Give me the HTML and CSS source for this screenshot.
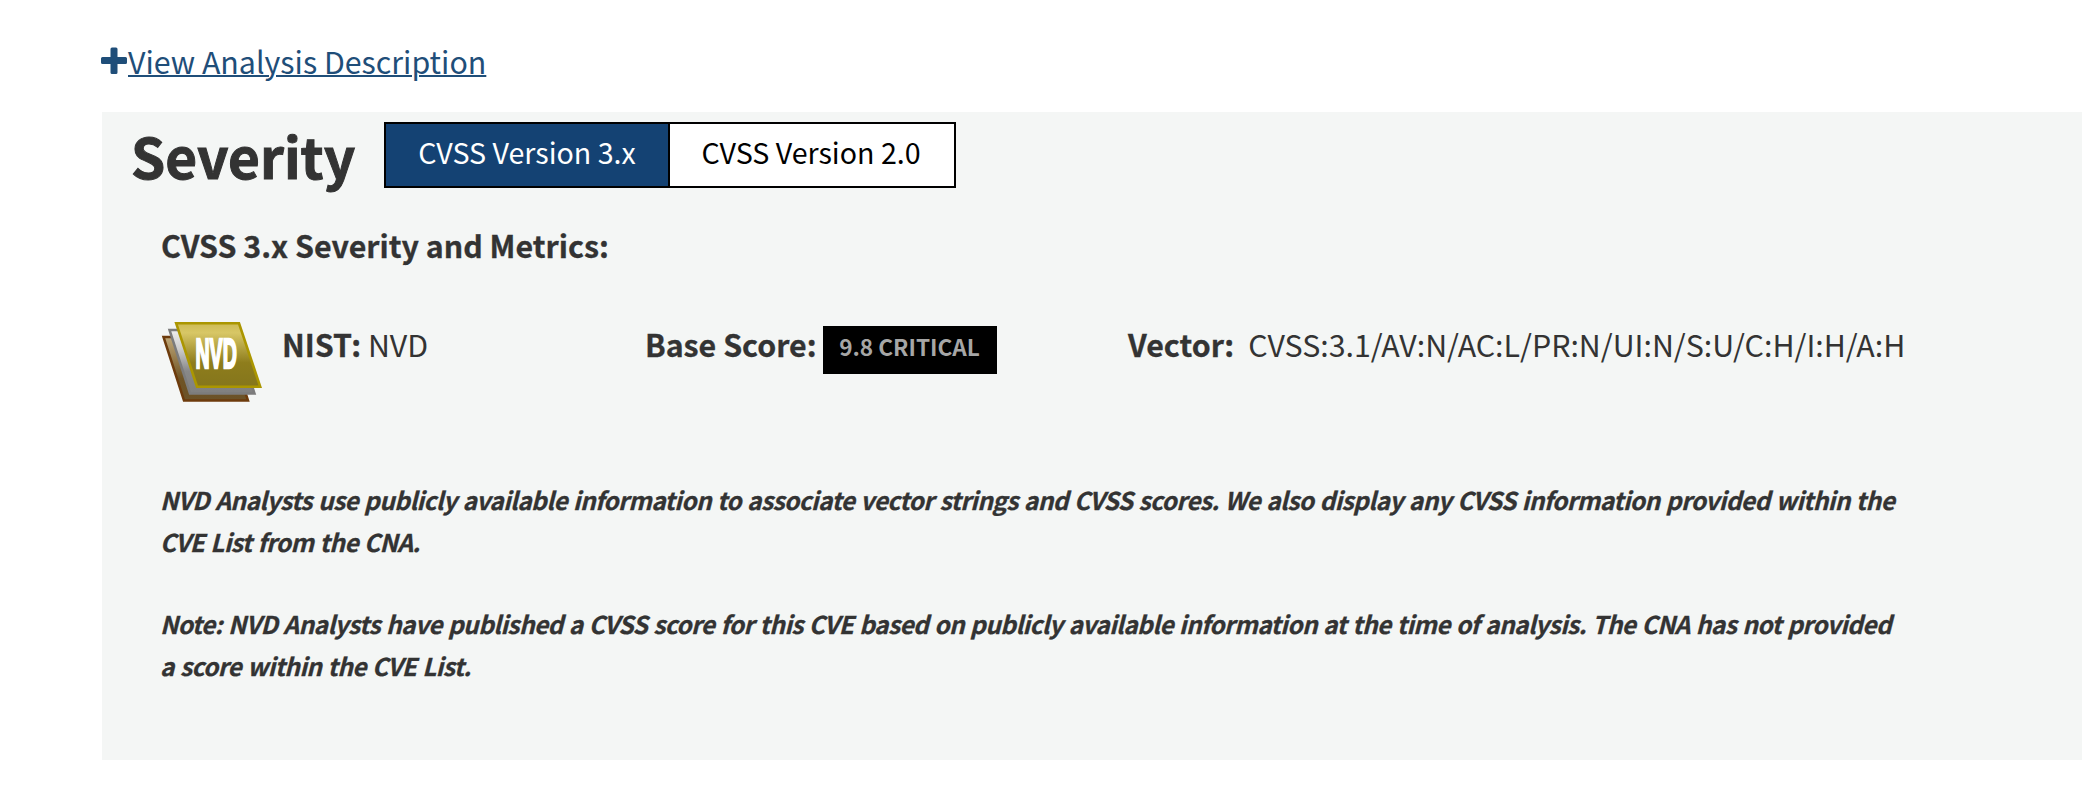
FILE: index.html
```
<!DOCTYPE html>
<html lang="en">
<head>
<meta charset="utf-8">
<title>CVE Detail</title>
<link rel="stylesheet" href="styles.css">
</head>
<body>
<a class="view-link" href="#"><svg class="plus" viewBox="0 0 26 26"><path d="M11 0h4q1.500 0 1.500 1.500V9.500h8q1.500 0 1.500 1.500v4q0 1.500-1.500 1.500h-8v8.500q0 1.500-1.500 1.500h-4q-1.500 0-1.500-1.500V16.500h-8Q0 16.500 0 15v-4q0-1.500 1.500-1.500h8v-8Q9.500 0 11 0z"/></svg><span>View Analysis Description</span></a>
<main class="panel">
  <header class="head">
    <h2>Severity</h2>
    <div class="tabs"><button class="tab active">CVSS Version 3.x</button><button class="tab">CVSS Version 2.0</button></div>
  </header>
  <p class="subtitle">CVSS 3.x Severity and Metrics:</p>
  <div class="row">
    <svg class="logo" viewBox="0 0 102 82">
      <defs>
        <linearGradient id="gold" x2="0" y2="1"><stop offset="0" stop-color="#cdbb55"/><stop offset=".15" stop-color="#d8c766"/><stop offset=".62" stop-color="#8e7d1c"/><stop offset="1" stop-color="#85761c"/></linearGradient>
        <linearGradient id="silver" x2="0" y2="1"><stop offset="0" stop-color="#eee"/><stop offset=".3" stop-color="#ccc"/><stop offset=".65" stop-color="#888"/><stop offset="1" stop-color="#808080"/></linearGradient>
        <linearGradient id="bronze" x2="0" y2="1"><stop offset="0" stop-color="#c0a878"/><stop offset=".65" stop-color="#6f5425"/><stop offset="1" stop-color="#6b5228"/></linearGradient>
      </defs>
      <path d="M2.500 15h64l20.500 63.500H23z" fill="url(#bronze)" stroke="#6d3b0c" stroke-width="2.500"/>
      <path d="M8.500 8h64L93.500 71.500H29z" fill="url(#silver)" stroke="#7c7c7c" stroke-width="2.500"/>
      <path d="M15.200 1.300h62.800l21.200 63.400H36z" fill="url(#gold)" stroke="#ab9600" stroke-width="2.600"/>
      <text transform="translate(34.500 46) scale(.465 1)">NVD</text>
    </svg>
    <div class="nist"><b>NIST:</b> <span>NVD</span></div>
    <div class="score"><b>Base Score:</b><span class="badge">9.8 CRITICAL</span></div>
    <div class="vector"><b>Vector:</b><span>CVSS:3.1/AV:N/AC:L/PR:N/UI:N/S:U/C:H/I:H/A:H</span></div>
  </div>
  <p class="note">NVD Analysts use publicly available information to associate vector strings and CVSS scores. We also display any CVSS information provided within the<br>CVE List from the CNA.</p>
  <p class="note second">Note: NVD Analysts have published a CVSS score for this CVE based on publicly available information at the time of analysis. The CNA has not provided<br>a score within the CVE List.</p>
</main>
</body>
</html>
```
FILE: styles.css
```
* { box-sizing: border-box; }
body { margin: 0; height: 800px; overflow: hidden; background: #fff; color: #333; font-family: "Noto Sans CJK SC", sans-serif; font-size: 30.35px; line-height: 42px; padding: 40px 0 0 101px; }
h2, p { margin: 0; }
b, .subtitle, .note { -webkit-text-stroke: .3px #333; }
.view-link { display: flex; height: 72px; color: #1f4e79; white-space: nowrap; text-decoration: none; }
.view-link span { margin-left: 1px; text-decoration: underline; text-decoration-thickness: 2px; }
.plus { width: 26px; height: 27px; margin-top: 7px; fill: #1f4e79; }
.panel { height: 648px; margin-left: 1px; background: #f4f6f5; padding: 10px 0 0 29px; }
.head { display: flex; height: 102px; }
h2 { width: 253px; flex: none; font-size: 54.9px; line-height: 67px; -webkit-text-stroke: 1px #333; }
.tabs { display: flex; width: 572px; height: 66px; border: 2px solid #000; }
.tab { flex: 1; border: 0; background: #fff; font: inherit; font-size: 28.6px; color: #000; white-space: nowrap; padding: 0 2px 7px 0; }
.active { background: #144273; color: #fff; border-right: 2px solid #000; padding-right: 0; }
.subtitle { font-weight: 700; padding-left: 30px; height: 98px; }
.row { display: flex; align-items: flex-start; height: 157px; padding-left: 30px; white-space: nowrap; }
.logo { width: 102px; height: 82px; flex: none; }
.logo text { font: 700 42px "Liberation Sans", sans-serif; fill: #fff; stroke: #fff; stroke-width: 2.5px; }
.nist { width: 363px; margin: 1px 0 0 19px; }
.score { display: flex; width: 483px; margin-top: 1px; gap: 6px; }
.badge { background: #000; color: #a6a6a6; font-weight: 700; font-size: 22.6px; width: 174px; height: 48px; margin-top: 3px; line-height: 42px; text-align: center; }
.vector { display: flex; gap: 14px; margin-top: 1px; }
.note { padding-left: 29px; font-size: 24.4px; letter-spacing: -.53px; word-spacing: 1px; font-weight: 700; font-style: italic; white-space: nowrap; }
.second { margin-top: 40px; }
```
